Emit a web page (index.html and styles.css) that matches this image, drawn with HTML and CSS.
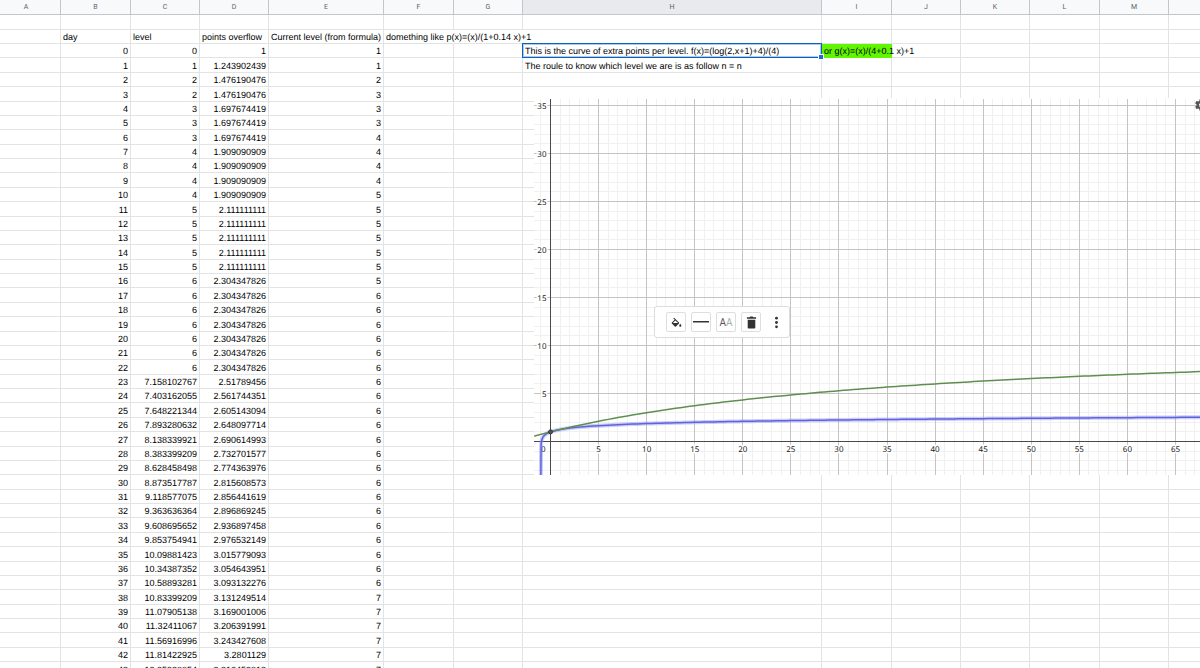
FILE: index.html
```html
<!DOCTYPE html>
<html lang="en">
<head>
<meta charset="utf-8">
<title>Points per level</title>
<link rel="stylesheet" href="styles.css">
</head>
<body>
<main class="sheet">
  <table class="grid">
    <colgroup>
      <col class="w-a"><col class="w-70"><col class="w-69"><col class="w-69"><col class="w-e">
      <col class="w-70"><col class="w-69"><col class="w-h"><col class="w-70"><col class="w-69">
      <col class="w-69"><col class="w-70"><col class="w-69"><col class="w-70">
    </colgroup>
    <thead>
      <tr>
        <th scope="col" class="cut">A</th><th scope="col">B</th><th scope="col">C</th><th scope="col">D</th>
        <th scope="col">E</th><th scope="col">F</th><th scope="col">G</th><th scope="col" class="active">H</th>
        <th scope="col">I</th><th scope="col">J</th><th scope="col">K</th><th scope="col">L</th>
        <th scope="col">M</th><th scope="col"></th>
      </tr>
    </thead>
    <tbody id="rows"></tbody>
  </table>

  <section class="chart" aria-label="Curve of extra points per level">
    <svg class="plot" id="plot" aria-hidden="true"></svg>
    <div class="tools">
      <button class="tool" aria-label="Fill colour">
        <svg viewBox="0 0 24 24"><path d="M16.560 8.940 7.620 0 6.210 1.410l2.380 2.380-5.150 5.150a1.490 1.490 0 0 0 0 2.120l5.500 5.500c.29.29.68.44 1.060.44s.77-.15 1.060-.44l5.500-5.500c.59-.58.59-1.530 0-2.120zM5.210 10 10 5.210 14.790 10zM19 11.500s-2 2.170-2 3.500c0 1.100.9 2 2 2s2-.9 2-2c0-1.330-2-3.500-2-3.500z" transform="translate(0 3)"/></svg>
      </button>
      <button class="tool" aria-label="Line style">
        <svg class="wide" viewBox="0 0 16 16"><path d="M0 7h16v1.500H0z"/></svg>
      </button>
      <button class="tool letters" aria-label="Label style">A<span class="pale">A</span></button>
      <button class="tool" aria-label="Delete">
        <svg viewBox="0 0 24 24"><path d="M5 21a2 2 0 0 0 2 2h10a2 2 0 0 0 2-2V7H5zM20.500 2.500h-5L14 1h-4L8.500 2.500h-5v2.500h17z"/></svg>
      </button>
      <button class="tool bare" aria-label="More">
        <svg viewBox="0 0 24 24"><circle cx="12" cy="4" r="2.600"/><circle cx="12" cy="12" r="2.600"/><circle cx="12" cy="20" r="2.600"/></svg>
      </button>
    </div>
    <button class="gear" aria-label="Settings">
      <svg viewBox="0 0 24 24"><path fill-rule="evenodd" d="M19.400 13a7.500 7.500 0 0 0 0-2l2.100-1.600a.5.5 0 0 0 .1-.7l-2-3.400a.5.5 0 0 0-.6-.2l-2.500 1a7.300 7.300 0 0 0-1.700-1L14.400 2.400a.5.5 0 0 0-.5-.4h-4a.5.5 0 0 0-.5.4L9 5.100a7.300 7.300 0 0 0-1.700 1l-2.500-1a.5.500 0 0 0-.6.2l-2 3.400a.5.5 0 0 0 .1.700L4.500 11a7.500 7.500 0 0 0 0 2l-2.200 1.600a.5.5 0 0 0-.1.700l2 3.400c.1.200.4.300.6.200l2.500-1a7.300 7.300 0 0 0 1.700 1l.4 2.700c0 .2.200.4.500.4h4c.3 0 .5-.2.500-.4l.4-2.700a7.300 7.300 0 0 0 1.700-1l2.500 1c.2.100.5 0 .6-.2l2-3.400a.5.5 0 0 0-.1-.7zM12 15.500a3.500 3.500 0 1 1 0-7 3.500 3.500 0 0 1 0 7z"/></svg>
    </button>
  </section>
</main>
<script src="sheet.js"></script>
</body>
</html>
```
FILE: styles.css
```css
body {
  margin: 0;
  background: #fff;
  color: #000;
  font-family: "Liberation Sans", Arial, sans-serif;
}

.sheet {
  position: relative;
  height: 100vh;
  overflow: hidden;
}

.grid {
  width: 100%;
  min-width: 1239px;
  table-layout: fixed;
  border-collapse: separate;
  border-spacing: 0;
  font-size: 9px;
  line-height: 11px;
  text-rendering: geometricPrecision;
}

.w-a { width: 61px; }
.w-69 { width: 69px; }
.w-70 { width: 70px; }
.w-e { width: 115px; }
.w-h { width: 299px; }

.grid th,
.grid td {
  box-sizing: border-box;
  padding: 0 2px;
  border-right: 1px solid #e2e3e3;
  border-bottom: 1px solid #e2e3e3;
  white-space: nowrap;
}

.grid th {
  height: 15px;
  border-color: #c4c6c8;
  background: #f8f9fa;
  color: #5f6368;
  font: 7px/14px Roboto, sans-serif;
  text-align: center;
}

.grid th.cut { padding-right: 10px; }
.grid th.active { background: #e8eaed; }

.grid td { height: 14px; vertical-align: bottom; }

tbody tr:nth-child(8n + 1) td,
tbody tr:nth-child(8n + 4) td,
tbody tr:nth-child(8n + 6) td { height: 15px; }

.grid td.num { text-align: right; }
.grid td.spill { border-right-color: transparent; }

.grid td.marked {
  border-color: #62f500;
  background: #62f500;
}

.spill span,
.marked span { position: relative; }

.grid td.selected { position: relative; }

.selected::before {
  content: "";
  position: absolute;
  inset: -1px;
  border: 1px solid #0b62b8;
  box-shadow: inset 0 0 0 1px #a9cdf0;
}

.selected span { position: relative; }

.selected::after {
  content: "";
  position: absolute;
  right: -3px;
  bottom: -3px;
  z-index: 1;
  width: 4px;
  height: 4px;
  border: 1px solid #fff;
  background: #1a6fd0;
}

.chart {
  position: absolute;
  top: 98px;
  left: 534px;
  right: 0;
  height: 377px;
  background: #fff;
}

.plot {
  display: block;
  width: 100%;
  height: 100%;
}

.minor { stroke: #f0f0f0; }
.major { stroke: #c4c4c4; }
.axis { stroke: #4a4a4a; }

.tick {
  fill: #222;
  stroke: #fff;
  stroke-width: 3px;
  paint-order: stroke;
  font: 8px "Noto Sans", sans-serif;
  text-rendering: geometricPrecision;
}

.curve { fill: none; }
.green { stroke: #5f8f50; stroke-width: 1.500; }
.blue { stroke: #6063dc; stroke-width: 1.500; }
.glow { stroke: #8f93f5; stroke-opacity: 0.45; stroke-width: 4; }
.point { fill: #555; stroke: #333; }

.tools {
  position: absolute;
  top: 208px;
  left: 120px;
  display: flex;
  align-items: center;
  gap: 5px;
  padding: 5px 3px 5px 11px;
  border: 1px solid #dcdcdc;
  border-radius: 3px;
  background: #fff;
}

.tool {
  display: flex;
  align-items: center;
  justify-content: center;
  box-sizing: border-box;
  width: 20px;
  height: 20px;
  padding: 0;
  border: 1px solid #dedede;
  border-radius: 2px;
  background: #fff;
  color: #555;
  font: 10px Roboto, sans-serif;
}

.tool svg {
  width: 13px;
  height: 13px;
  fill: #333;
}

.tool .wide { width: 16px; height: 16px; }
.tool.bare { border-color: transparent; }
.pale { color: #aaa; }

.gear {
  position: absolute;
  top: 0;
  right: -8px;
  width: 14px;
  height: 14px;
  padding: 0;
  border: 0;
  background: none;
}

.gear svg { display: block; fill: #555; }
```
FILE: sheet.js
```js
// Columns B to E: day, level, points overflow, current level.
const data = `0 0 1 1
1 1 1.243902439 1
2 2 1.476190476 2
3 2 1.476190476 3
4 3 1.697674419 3
5 3 1.697674419 3
6 3 1.697674419 4
7 4 1.909090909 4
8 4 1.909090909 4
9 4 1.909090909 4
10 4 1.909090909 5
11 5 2.111111111 5
12 5 2.111111111 5
13 5 2.111111111 5
14 5 2.111111111 5
15 5 2.111111111 5
16 6 2.304347826 5
17 6 2.304347826 6
18 6 2.304347826 6
19 6 2.304347826 6
20 6 2.304347826 6
21 6 2.304347826 6
22 6 2.304347826 6
23 7.158102767 2.51789456 6
24 7.403162055 2.561744351 6
25 7.648221344 2.605143094 6
26 7.893280632 2.648097714 6
27 8.138339921 2.690614993 6
28 8.383399209 2.732701577 6
29 8.628458498 2.774363976 6
30 8.873517787 2.815608573 6
31 9.118577075 2.856441619 6
32 9.363636364 2.896869245 6
33 9.608695652 2.936897458 6
34 9.853754941 2.976532149 6
35 10.09881423 3.015779093 6
36 10.34387352 3.054643951 6
37 10.58893281 3.093132276 6
38 10.83399209 3.131249514 7
39 11.07905138 3.169001006 7
40 11.32411067 3.206391991 7
41 11.56916996 3.243427608 7
42 11.81422925 3.2801129 7
43 12.05928854 3.316452813 7`.split("\n").map(line => line.split(" "));

const columns = 14;
const tbody = document.getElementById("rows");

function addRow(cells) {
  const tr = tbody.insertRow();
  for (let c = 0; c < columns; c++) {
    const td = tr.insertCell();
    const cell = cells[c];
    if (!cell) continue;
    td.className = cell.kind || "";
    const span = document.createElement("span");
    span.textContent = cell.text;
    td.append(span);
  }
}

addRow({});
addRow({
  1: { text: "day" },
  2: { text: "level" },
  3: { text: "points overflow" },
  4: { text: "Current level (from formula)" },
  5: { text: "domething like p(x)=(x)/(1+0.14 x)+1", kind: "spill" },
  6: { text: "", kind: "spill" }
});
data.forEach((values, i) => {
  const cells = {};
  values.forEach((text, c) => { cells[c + 1] = { text, kind: "num" }; });
  if (i === 0) {
    cells[7] = { text: "This is the curve of extra points per level. f(x)=(log(2,x+1)+4)/(4)", kind: "selected" };
    cells[8] = { text: "or g(x)=(x)/(4+0.1 x)+1", kind: "marked" };
  }
  if (i === 1) cells[7] = { text: "The roule to know which level we are is as follow n = n" };
  addRow(cells);
});

// Plot
const plot = document.getElementById("plot");
const originX = 16.5, originY = 343.5, unitX = 9.615, unitY = 9.6;
const width = plot.clientWidth, height = plot.clientHeight;
const px = x => originX + x * unitX;
const py = y => originY - y * unitY;
const snap = v => Math.floor(v) + 0.5;

function add(name, attrs, text) {
  const el = document.createElementNS("http://www.w3.org/2000/svg", name);
  for (const key in attrs) el.setAttribute(key, attrs[key]);
  if (text !== undefined) el.textContent = text;
  plot.append(el);
}
const vertical = (x, kind) => add("line", { x1: snap(px(x)), x2: snap(px(x)), y1: 1, y2: height, class: kind });
const horizontal = (y, kind) => add("line", { x1: 0, x2: width, y1: snap(py(y)), y2: snap(py(y)), class: kind });

const maxX = Math.floor((width - originX) / unitX);
for (let x = -1; x <= maxX; x++) if (x % 5) vertical(x, "minor");
for (let y = -3; y <= 35; y++) if (y % 5) horizontal(y, "minor");
for (let x = 5; x <= maxX; x += 5) vertical(x, "major");
for (let y = 5; y <= 35; y += 5) horizontal(y, "major");

for (let x = 5; x <= maxX; x += 5)
  add("text", { x: px(x), y: originY + 10, "text-anchor": "middle", class: "tick" }, x);
for (let y = 5; y <= 35; y += 5)
  add("text", { x: originX - 4, y: py(y) + 3, "text-anchor": "end", class: "tick" }, y);
add("text", { x: originX - 5, y: originY + 10, "text-anchor": "end", class: "tick" }, 0);
vertical(0, "axis");
horizontal(0, "axis");

function curve(f, from, kinds) {
  let d = "";
  for (let x = from; px(x) < width + 10; x += x < 2 ? 0.02 : 0.5)
    d += (d ? "L" : "M") + px(x).toFixed(2) + " " + Math.min(py(f(x)), height).toFixed(2);
  kinds.forEach(kind => add("path", { d, class: "curve " + kind }));
}
curve(x => (Math.log2(x + 1) + 4) / 4, -0.99999999, ["glow", "blue"]);
curve(x => x / (4 + 0.1 * x) + 1, -1.7, ["green"]);
add("circle", { cx: px(0), cy: py(1), r: 2, class: "point" });
```
